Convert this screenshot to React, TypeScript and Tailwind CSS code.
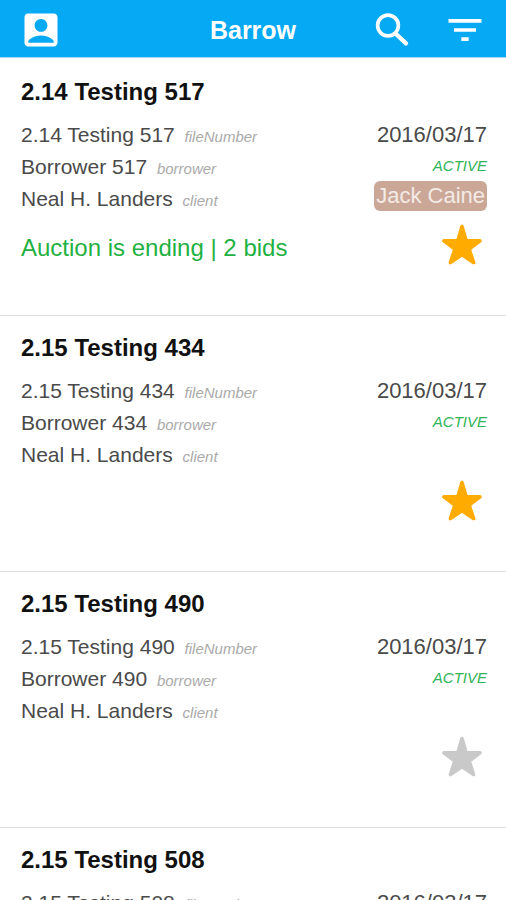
import { useState } from "react";
import { MdAccountBox, MdFilterList } from "react-icons/md";

type Order = {
    id: number;
    title: string;
    borrower: string;
    client: string;
    date: string;
    status: string;
    assignee?: string;
    auction?: string;
    starred: boolean;
};

const initialOrders: Order[] = [
    {
        id: 517,
        title: "2.14 Testing 517",
        borrower: "Borrower 517",
        client: "Neal H. Landers",
        date: "2016/03/17",
        status: "ACTIVE",
        assignee: "Jack Caine",
        auction: "Auction is ending | 2 bids",
        starred: true,
    },
    {
        id: 434,
        title: "2.15 Testing 434",
        borrower: "Borrower 434",
        client: "Neal H. Landers",
        date: "2016/03/17",
        status: "ACTIVE",
        starred: true,
    },
    {
        id: 490,
        title: "2.15 Testing 490",
        borrower: "Borrower 490",
        client: "Neal H. Landers",
        date: "2016/03/17",
        status: "ACTIVE",
        starred: false,
    },
    {
        id: 508,
        title: "2.15 Testing 508",
        borrower: "Borrower 508",
        client: "Neal H. Landers",
        date: "2016/03/17",
        status: "ACTIVE",
        starred: false,
    },
];

function SearchIcon() {
    return (
        <svg viewBox="0 0 44 44" className="size-11" fill="none" stroke="currentColor" aria-hidden="true">
            <circle cx="17" cy="17.5" r="10.4" strokeWidth="3.6" />
            <path d="M25 26 35 35.3" strokeWidth="4.4" strokeLinecap="round" />
        </svg>
    );
}

function StarIcon() {
    return (
        <svg
            viewBox="0 0 40 42"
            className="h-[42px] w-10"
            fill="currentColor"
            stroke="currentColor"
            strokeWidth="3.6"
            strokeLinejoin="round"
            aria-hidden="true"
        >
            <path d="M20 2.5 24.2 16.8H38L27.2 25.2 31.6 38.6 20 30.8 8.4 38.6 12.8 25.2 2 16.8H15.8Z" />
        </svg>
    );
}

function Detail({ value, name }: { value: string; name: string }) {
    return (
        <div className="whitespace-nowrap">
            <dd className="inline">{value}</dd>{" "}
            <dt className="ml-1 inline text-[15px] leading-none text-[#aaaaaa] italic">{name}</dt>
        </div>
    );
}

function OrderCard({ order, onToggleStar }: { order: Order; onToggleStar: (id: number) => void }) {
    return (
        <li className="flex h-64 flex-col border-b border-[#e0e0e0] pt-4 pr-[19px] pl-[21px]">
            <h2 className="text-2xl leading-8 font-bold text-[#111111]">{order.title}</h2>

            <div className="mt-[11px] flex justify-between text-[#4a4a4a]">
                <dl className="text-[21px] leading-8">
                    <Detail value={order.title} name="fileNumber" />
                    <Detail value={order.borrower} name="borrower" />
                    <Detail value={order.client} name="client" />
                </dl>
                <div className="flex flex-col items-end text-[22px] leading-8">
                    <time>{order.date}</time>
                    <span className="text-[15px] leading-[30px] text-[#2fb457] italic">{order.status}</span>
                    {order.assignee && (
                        <span className="rounded-md bg-[#cba797] px-0.5 leading-[30px] text-[#f3ebe7]">
                            {order.assignee}
                        </span>
                    )}
                </div>
            </div>

            <div className="mt-[9px] flex items-end justify-between">
                <p className="text-2xl leading-9 text-[#1fb141]">{order.auction}</p>
                <button
                    type="button"
                    aria-label="Favorite"
                    aria-pressed={order.starred}
                    onClick={() => onToggleStar(order.id)}
                    className={`mr-[5px] ${order.starred ? "text-[#ffab00]" : "text-[#c9c9c9]"}`}
                >
                    <StarIcon />
                </button>
            </div>
        </li>
    );
}

function App() {
    const [orders, setOrders] = useState<Order[]>(initialOrders);

    const toggleStar = (id: number) => {
        setOrders(orders.map((order) => (order.id === id ? { ...order, starred: !order.starred } : order)));
    };

    return (
        <div className="flex h-screen flex-col bg-white font-['Liberation_Sans',Arial,sans-serif]">
            <header className="grid shrink-0 grid-cols-[1fr_auto_1fr] items-center border-b border-[#a9d8f5] bg-[#05a9f4] px-[19px] pt-2 pb-[5px] text-white">
                <button type="button" aria-label="Account" className="justify-self-start">
                    <MdAccountBox className="size-11" />
                </button>
                <h1 className="text-[25px] leading-8 font-bold">Barrow</h1>
                <div className="flex justify-end gap-7">
                    <button type="button" aria-label="Search">
                        <SearchIcon />
                    </button>
                    <button type="button" aria-label="Filter">
                        <MdFilterList className="size-11" />
                    </button>
                </div>
            </header>

            <main className="min-h-0 flex-1 overflow-y-auto pt-0.5 [scrollbar-width:none]">
                <ul>
                    {orders.map((order) => (
                        <OrderCard key={order.id} order={order} onToggleStar={toggleStar} />
                    ))}
                </ul>
            </main>
        </div>
    );
}

export default App;
